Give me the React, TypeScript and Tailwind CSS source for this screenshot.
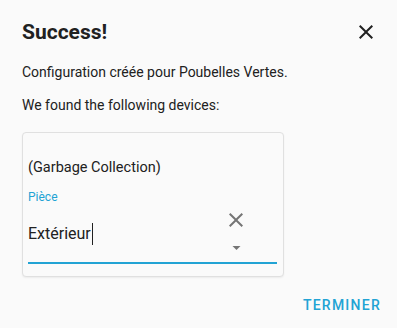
export default function App() {
  return (
    <div
      className="flex h-[328px] w-[397px] flex-col bg-[#fafafa] text-[#212121]"
      style={{ fontFamily: 'Roboto, "Noto Sans", sans-serif' }}
    >
      <header className="flex items-center justify-between pl-[22px] pr-[19px] pt-[20px]">
        <h2 className="text-[21px] font-bold leading-[24px]">Success!</h2>
        <button className="flex h-[24px] w-[24px] items-center justify-center text-[#212121]">
          <svg viewBox="0 0 24 24" className="h-[24px] w-[24px]" fill="currentColor">
            <path d="M19,6.41L17.59,5L12,10.59L6.41,5L5,6.41L10.59,12L5,17.59L6.41,19L12,13.41L17.59,19L19,17.59L13.41,12L19,6.41Z" />
          </svg>
        </button>
      </header>

      <div className="flex flex-col px-[22px] pt-[18px] text-[14px] leading-[20px]">
        <p>Configuration créée pour Poubelles Vertes.</p>
        <p className="mt-[13px]">We found the following devices:</p>

        <div className="mt-[17px] flex h-[145px] w-[262px] flex-col rounded-[4px] border border-[#e0e0e0] bg-[#fafafa] px-[5px] shadow-[0_1px_2px_rgba(0,0,0,0.06)]">
          <div className="pt-[25px] text-[14.5px] leading-[20px]">(Garbage Collection)</div>

          <div className="mt-[12px] flex flex-col">
            <span className="text-[12px] leading-[14px] text-[#22a3d4]">Pièce</span>
            <div className="flex items-start justify-between">
              <div className="flex items-center pt-[18px] text-[16px] leading-[24px]">
                Extérieur
                <span className="ml-px h-[22px] w-px bg-[#212121]" />
              </div>
              <div className="mr-[30px] flex flex-col items-center">
                <svg viewBox="0 0 24 24" className="mt-[4px] h-[24px] w-[24px]" fill="#757575">
                  <path d="M19,6.41L17.59,5L12,10.59L6.41,5L5,6.41L10.59,12L5,17.59L6.41,19L12,13.41L17.59,19L19,17.59L13.41,12L19,6.41Z" />
                </svg>
                <svg viewBox="0 0 10 5" className="mt-[14px] h-[4px] w-[9px]" fill="#757575">
                  <path d="M0,0L5,5L10,0Z" />
                </svg>
              </div>
            </div>
            <div className="mt-[12px] h-[2px] w-[249px] bg-[#22a3d4]" />
          </div>
        </div>
      </div>

      <div className="flex justify-end pr-[16px] pt-[20px]">
        <button className="text-[14px] font-medium uppercase leading-[16px] tracking-[1.25px] text-[#22a3d4]">
          Terminer
        </button>
      </div>
    </div>
  );
}
